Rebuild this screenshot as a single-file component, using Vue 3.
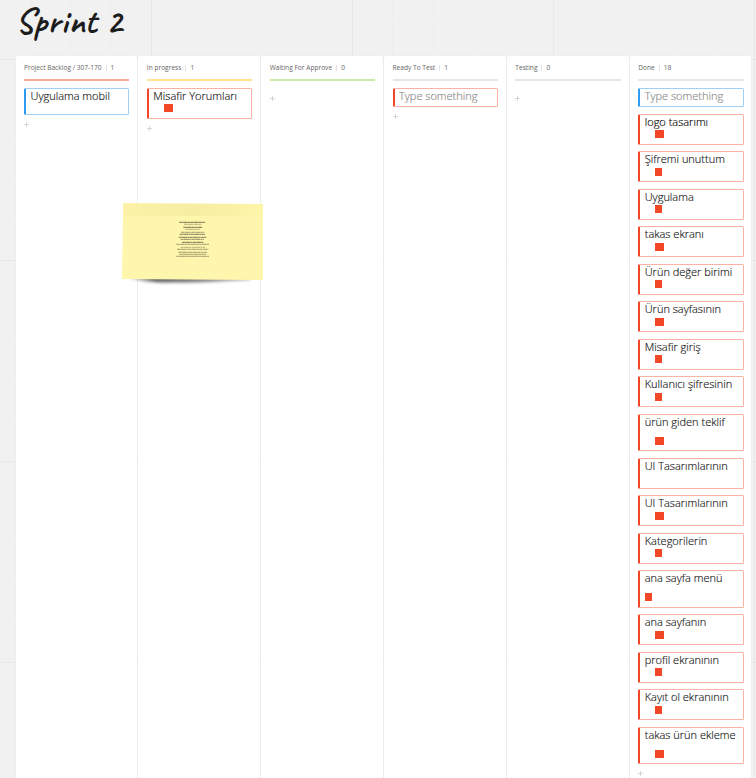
<script setup>
const done = [
  ['logo tasarımı', 'wide', 'black'],
  ['Şifremi unuttum', 'narrow'],
  ['Uygulama', 'narrow'],
  ['takas ekranı', 'wide'],
  ['Ürün değer birimi', 'narrow'],
  ['Ürün sayfasının', 'wide'],
  ['Misafir giriş', 'narrow'],
  ['Kullanıcı şifresinin', 'narrow'],
  ['ürün giden teklif', 'wide', 'tall'],
  ['UI Tasarımlarının', ''],
  ['UI Tasarımlarının', 'wide'],
  ['Kategorilerin', 'narrow'],
  ['ana sayfa menü', 'narrow', 'tall start'],
  ['ana sayfanın', 'wide'],
  ['profil ekranının', 'narrow'],
  ['Kayıt ol ekranının', 'narrow'],
  ['takas ürün ekleme', 'wide', 'tall'],
].map(([text, tag, mod]) => ({ text, tag, mod, color: 'red' }))

const columns = [
  { name: 'Project Backlog / 307-170', count: 1, line: '#faa79c', cards: [{ text: 'Uygulama mobil', color: 'blue', mod: 'plain' }] },
  { name: 'In progress', count: 1, line: '#fde38f', cards: [{ text: 'Misafir Yorumları', color: 'red', tag: 'wide' }] },
  { name: 'Waiting For Approve', count: 0, line: '#cdeaa8', cards: [] },
  { name: 'Ready To Test', count: 1, line: '#e6e6e6', cards: [{ text: 'Type something', color: 'red', mod: 'empty' }] },
  { name: 'Testing', count: 0, line: '#e6e6e6', cards: [] },
  { name: 'Done', count: 18, line: '#e6e6e6', cards: [{ text: 'Type something', color: 'blue', mod: 'empty' }, ...done] },
]

// [x, y, width, opacity] of each miniature line on the note
const noteLines = [
  [57.3, 19.3, 26, 0.75], [62, 21.3, 17.3, 0.4], [61.3, 24.3, 18.7, 0.75], [63.3, 26.3, 14.7, 0.4],
  [59, 29.3, 23.3, 0.5], [57.7, 31.3, 25.6, 0.7], [56.7, 34.3, 27.6, 0.7], [58.7, 36.3, 23.3, 0.6],
  [60, 39.3, 21.3, 0.75], [54.3, 41.3, 32.7, 0.5], [58.7, 44.3, 24.6, 0.4], [55, 46.3, 31.3, 0.5],
  [56.3, 49.3, 28.7, 0.5], [57.3, 51.3, 27, 0.5], [54.3, 53.3, 32.7, 0.5],
]
</script>

<template>
  <main class="board">
    <h1 class="title">Sprint 2</h1>
    <section class="columns">
      <article v-for="col in columns" :key="col.name" class="column">
        <header class="head">
          <span>{{ col.name }}</span><i class="sep"></i><span>{{ col.count }}</span>
        </header>
        <div class="line" :style="{ background: col.line }"></div>
        <div class="cards">
          <div v-for="(card, i) in col.cards" :key="i" class="card" :class="[card.color, card.mod]">
            <span class="text">{{ card.text }}</span>
            <span v-if="card.tag" class="tag" :class="card.tag"></span>
          </div>
        </div>
        <svg class="plus" :class="{ first: !col.cards.length }" viewBox="0 0 5 5"><path d="M2.5 0V5M0 2.5H5" /></svg>
      </article>
    </section>
    <svg class="note" width="150" height="90" viewBox="0 0 150 90">
      <defs>
        <filter id="soft" x="-10%" y="-100%" width="120%" height="300%"><feGaussianBlur stdDeviation="1.8" /></filter>
        <linearGradient id="strip"><stop offset="0" stop-color="#fbf1a7" /><stop offset=".5" stop-color="#f6eca2" /><stop offset="1" stop-color="#fff5a9" /></linearGradient>
        <linearGradient id="shade"><stop offset="0" stop-opacity="0.1" /><stop offset=".2" stop-opacity=".6" /><stop offset=".5" stop-opacity=".5" /><stop offset="1" stop-opacity="0.25" /></linearGradient>
      </defs>
      <path d="M8 70H137L127 77Q80 80 38 79.5Q25 79 8 76Z" fill="url(#shade)" filter="url(#soft)" />
      <path d="M1.2 .3L141 1V77L0 76Z" fill="#fff6ae" />
      <path d="M1.2 .3L141 1V13H1Z" fill="url(#strip)" />
      <line v-for="(l, i) in noteLines" :key="i" :x1="l[0]" :x2="l[0] + l[2]" :y1="l[1]" :y2="l[1]" :stroke-opacity="l[3]" class="scribble" />
    </svg>
  </main>
</template>

<style>
body { overflow: hidden; }
</style>

<style scoped>
.board {
  position: relative;
  box-sizing: border-box;
  width: 756px;
  height: 778px;
  overflow: hidden;
  padding-left: 15.6px;
  font-family: "Open Sans", "Noto Sans", sans-serif;
  background-color: #f1f1f1;
  background-image:
    linear-gradient(90deg, #e8e8e8 1.5px, transparent 1.5px),
    linear-gradient(#e8e8e8 1.5px, transparent 1.5px),
    linear-gradient(90deg, #eee 1px, transparent 1px),
    linear-gradient(#eee 1px, transparent 1px);
  background-size: 201px 201px, 201px 201px, 40.2px 40.2px, 40.2px 40.2px;
  background-position: 151px 0, 0 59px, 151px 0, 0 59px;
}
.title {
  box-sizing: border-box;
  height: 56px;
  margin: 0;
  padding: 0;
  font: 600 35px/44px Caveat, "Lato", cursive;
  letter-spacing: 0.65px;
  color: #1c1c1c;
  white-space: nowrap;
}
.columns {
  display: grid;
  grid-template-columns: repeat(6, 121.6px);
  column-gap: 1.25px;
  height: 722px;
}
.column {
  min-width: 0;
  padding: 0 8.4px;
  background: #fff;
  border-radius: 2px 2px 0 0;
  box-shadow: 0 0 1.5px #e6e6e6;
}
.head {
  display: flex;
  align-items: center;
  height: 23px;
  font-size: 6.6px;
  line-height: 23px;
  color: #666;
  white-space: nowrap;
}
.sep { width: 1px; height: 6px; margin: 0 4px 0 4px; background: #e3e3e3; }
.line { height: 2px; width: 105.5px; }
.cards {
  display: flex;
  flex-direction: column;
  gap: 6.5px;
  padding-top: 6.9px;
}
.card {
  position: relative;
  box-sizing: border-box;
  flex: none;
  width: 105.5px;
  height: 31px;
  padding-left: 4.5px;
  border: 1px solid;
  border-left-width: 2px;
  border-radius: 1.5px;
}
.red { border-color: #fbb1a6; border-left-color: #f24726; }
.blue { border-color: #9fd0f8; border-left-color: #2d9bf0; }
.text {
  display: block;
  height: 15px;
  font-size: 11px;
  font-weight: 300;
  line-height: 14px;
  color: #111;
  -webkit-text-stroke: 0.15px currentColor;
  white-space: nowrap;
}
.plain { height: 27px; }
.empty { height: 19.5px; }
.empty .text { color: #888; }
.black .text { color: #000; }
.tall { height: 37.5px; }
.tag {
  display: block;
  width: 9px;
  height: 8px;
  margin: 0.6px 0 0 10.5px;
  background: #f24726;
}
.narrow { width: 7px; }
.tall .tag { margin-top: 7px; }
.start .tag { margin-left: 0; }
.plus { display: block; width: 5px; height: 5px; margin-top: 7px; }
.plus.first { margin-top: 8px; }
.plus path { stroke: #ccc; stroke-width: .8; }
.note { position: absolute; left: 122px; top: 203px; }
.scribble { stroke: #44422e; stroke-width: 1; stroke-dasharray: 3 .35 5 .3 2 .4; }
</style>
